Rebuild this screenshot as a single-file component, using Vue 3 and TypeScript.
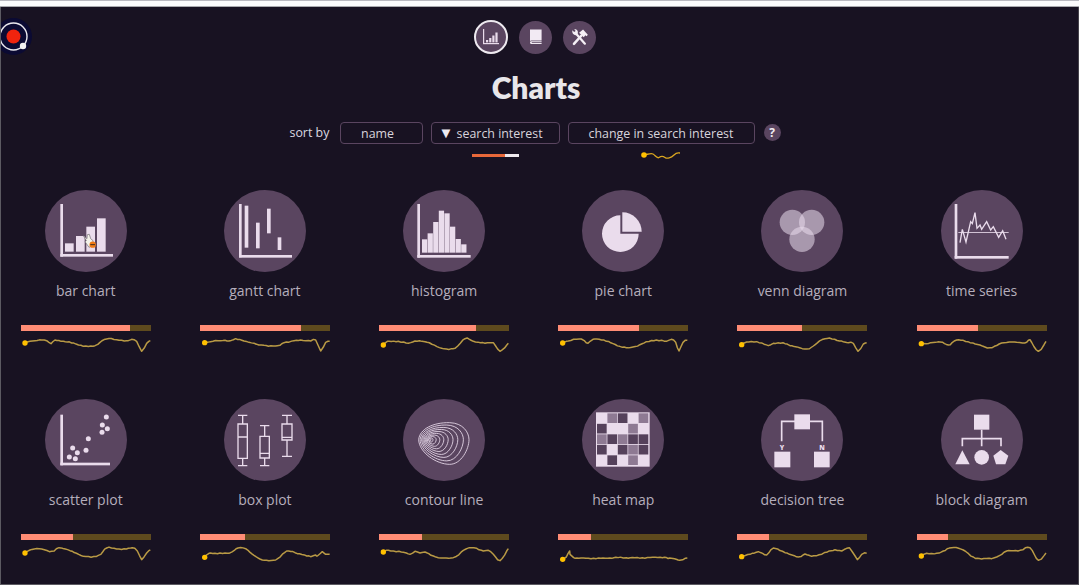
<template>
  <div class="browser-strip"></div>
  <div class="page">
    <!-- recording button of the screen capture tool -->
    <div class="recorder">
      <svg width="37" height="37" viewBox="0 0 37 37">
        <circle cx="18.5" cy="18.5" r="18.5" fill="#0b0a33" />
        <circle cx="18.5" cy="18.5" r="13.5" fill="none" stroke="#eceaf0" stroke-width="1.4" />
        <circle cx="18.5" cy="18.5" r="7" fill="#f0240e" />
        <circle cx="28" cy="28" r="3.2" fill="#f2f2f2" />
      </svg>
    </div>

    <nav class="top-nav">
      <button class="nav-btn active">
        <svg width="18" height="18" viewBox="0 0 18 18" fill="#eadcec">
          <rect x="1" y="1" width="1.2" height="15" />
          <rect x="1" y="15" width="16" height="1.2" />
          <rect x="4" y="12" width="2.2" height="2.4" />
          <rect x="7.2" y="10" width="2.2" height="4.4" />
          <rect x="10.3" y="7.5" width="2.2" height="6.9" />
          <rect x="13.4" y="4.5" width="2.2" height="9.9" />
        </svg>
      </button>
      <button class="nav-btn">
        <svg width="18" height="18" viewBox="0 0 18 18" fill="#f2eaf3">
          <path d="M3 1.500H14.600V12.400H4.400C3.800 12.400 3.300 12.600 3 13Z" />
          <path d="M3 14.500C3 13.700 3.600 13.300 4.400 13.300H14.600V14.200H4.800V15H14.600V16H4.400C3.600 16 3 15.300 3 14.500Z" />
        </svg>
      </button>
      <button class="nav-btn">
        <svg width="19" height="19" viewBox="0 0 24 24">
          <g fill="none" stroke="#f6f0f6" stroke-linecap="round">
            <path d="M14.500 9.500 5 20" stroke-width="3.200" />
            <path d="M8 7.500 18.800 19.800" stroke-width="2.800" />
          </g>
          <path d="M11.500 6 16.500 2 22.500 8.500 21 10.300 19.500 9.200 17.300 11.800Z" fill="#f6f0f6" />
          <path d="M3 2.800 5.200 5.200 7.200 3.800 5.300 1.700C8.200 1 10.800 3.600 9.800 6.800L8.500 8.800C5.500 10 2 6.500 3 2.800Z" fill="#f6f0f6" />
        </svg>
      </button>
    </nav>

    <h1 class="page-title">{{ title }}</h1>

    <div class="sort-row">
      <span class="sort-label">sort by</span>
      <div class="sort-col col-name">
        <button class="sort-btn">name</button>
      </div>
      <div class="sort-col col-interest">
        <button class="sort-btn"><span class="sort-arrow">▼</span> search interest</button>
        <div class="hint-bar"><div class="hint-fill"></div></div>
      </div>
      <div class="sort-col col-change">
        <button class="sort-btn">change in search interest</button>
        <svg class="hint-spark" width="40" height="8" viewBox="0 0 40 8">
          <path d="M3 4C8 3 10 2 12 3S16 8 18 6.500 22 5 24 6.500 30 7 33 4 37 2 39 2" fill="none" stroke="#d9a520" stroke-width="1.3" />
          <circle cx="3" cy="4" r="2.8" fill="#ffc000" />
        </svg>
      </div>
      <span class="help">?</span>
    </div>

    <div class="charts-grid">
      <div v-for="chart in charts" :key="chart.name" class="chart-card">
        <div class="chart-circle">
          <svg class="chart-icon" width="82" height="82" viewBox="0 0 246 246">
            <g v-if="chart.kind === 'bar'" class="solid">
              <rect x="46" y="42" width="8" height="158" />
              <rect x="46" y="192" width="158" height="8" />
              <rect x="60" y="160" width="26" height="25" />
              <rect x="93" y="138" width="26" height="47" />
              <rect x="124" y="110" width="26" height="75" />
              <rect x="156" y="85" width="26" height="100" />
              <path d="M115 137 126 146 127 134 133 133 137 146 144 152 144 165 132 172 120 155 124 152Z" fill="#f3f2ea" stroke="#6e6a70" stroke-width="2" />
              <circle cx="143" cy="164" r="9.500" fill="#f07a14" />
              <rect x="136" y="162" width="14" height="3.500" fill="#5a3a20" />
            </g>
            <g v-else-if="chart.kind === 'gantt'" class="solid">
              <rect x="45" y="42" width="8" height="160" />
              <rect x="45" y="195" width="159" height="8" />
              <rect x="62" y="47" width="11" height="126" />
              <rect x="96" y="98" width="11" height="77" />
              <rect x="129" y="56" width="11" height="74" />
              <rect x="161" y="142" width="11" height="38" />
            </g>
            <g v-else-if="chart.kind === 'histogram'" class="solid">
              <rect x="43" y="42" width="8" height="161" />
              <rect x="43" y="195" width="160" height="8" />
              <rect v-for="(top, i) in histTops" :key="i" :x="57 + i * 16.8" :y="top" width="15.800" :height="188 - top" />
            </g>
            <g v-else-if="chart.kind === 'pie'" class="solid">
              <path d="M115 131V76A55 55 0 1 0 170 131Z" />
              <path d="M121 125V67A58 58 0 0 1 179 125Z" />
            </g>
            <g v-else-if="chart.kind === 'venn'" class="venn">
              <circle cx="94" cy="97" r="38" />
              <circle cx="152" cy="97" r="38" />
              <circle cx="123" cy="148" r="38" />
            </g>
            <g v-else-if="chart.kind === 'time'" class="solid">
              <rect x="41" y="42" width="8" height="164" />
              <rect x="41" y="198" width="162" height="8" />
              <rect x="52" y="126" width="151" height="2.500" />
              <polyline class="line" points="57,158 64,118 75,156 89,95 94,101 102,68 108,115 117,105 122,118 137,95 149,120 157,110 173,142 185,122 195,148" />
            </g>
            <g v-else-if="chart.kind === 'scatter'" class="solid">
              <rect x="46" y="47" width="8" height="152" />
              <rect x="46" y="191" width="149" height="8" />
              <circle v-for="(dot, i) in scatterDots" :key="i" :cx="dot[0]" :cy="dot[1]" r="7.500" />
            </g>
            <g v-else-if="chart.kind === 'box'" class="line boxes">
              <path d="M42 49H70M56 49V75M42 75H70V178H42ZM42 114H70M56 178V200M42 200H70" />
              <path d="M108 80H136M122 80V112M108 112H136V177H108ZM108 163H136M122 177V200M108 200H136" />
              <path d="M174 49H204M189 49V75M174 75H204V123H174ZM174 115H204M189 123V172M174 172H204" />
            </g>
            <g v-else-if="chart.kind === 'contour'" class="contour">
              <path
                v-for="s in contourScales"
                :key="s"
                d="M47 122C50 90 90 70 140 71 180 72 198 100 198 122 198 150 175 196 140 196 100 196 48 160 47 122Z"
                vector-effect="non-scaling-stroke"
                :transform="`translate(78 122) scale(${s}) translate(-78 -122)`"
              />
            </g>
            <g v-else-if="chart.kind === 'heat'">
              <rect class="solid-rect" x="42" y="40" width="161" height="163" />
              <template v-for="(row, r) in heatCells" :key="r">
                <rect
                  v-for="(cell, c) in row"
                  :key="c"
                  :class="`heat-${cell}`"
                  :x="45 + c * 31.200"
                  :y="43 + r * 31.500"
                  width="29"
                  height="29"
                />
              </template>
            </g>
            <g v-else-if="chart.kind === 'tree'" class="solid">
              <path class="line thick" d="M62 127V67H184V127" />
              <rect x="100" y="46" width="47" height="45" />
              <rect x="40" y="158" width="48" height="47" />
              <rect x="159" y="158" width="47" height="47" />
              <text class="tree-label" x="63" y="152">Y</text>
              <text class="tree-label" x="183" y="152">N</text>
            </g>
            <g v-else class="solid">
              <path class="line thick" d="M122 92V142M64 142V119H180V142" />
              <rect x="99" y="47" width="46" height="45" />
              <polygon points="64,154 86,196 43,196" />
              <circle cx="122" cy="175" r="22" />
              <polygon points="179,153 202,170 193,196 165,196 157,170" />
            </g>
          </svg>
        </div>
        <div class="chart-name">{{ chart.name }}</div>
        <div class="interest-bar">
          <div class="interest-fill" :style="{ width: chart.interest + '%' }"></div>
        </div>
        <svg class="spark" width="130" height="20" viewBox="0 0 390 60">
          <polyline class="spark-line" :points="wiggle(chart.spark)" />
          <circle class="spark-dot" :cx="firstPoint(chart.spark)[0]" :cy="firstPoint(chart.spark)[1]" r="8" />
        </svg>
      </div>
    </div>
  </div>
</template>

<script setup lang="ts">
import { ref } from "vue"

interface Chart {
  name: string
  kind: string
  interest: number
  spark: string
}

const title = ref("Charts")

const histTops = [148, 130, 96, 62, 70, 110, 147, 163]
const scatterDots = [
  [184, 54], [172, 78], [187, 89], [171, 100], [130, 119],
  [123, 154], [83, 147], [97, 161], [73, 174], [91, 179]
]
const contourScales = [1, 0.86, 0.72, 0.6, 0.48, 0.37, 0.27, 0.18, 0.1, 0.05]

// l = light, m = mid, d = dark
const heatCells = [
  ["l", "m", "d", "l", "m"],
  ["d", "l", "l", "m", "l"],
  ["m", "d", "m", "d", "d"],
  ["d", "l", "d", "m", "d"],
  ["l", "d", "l", "m", "l"]
]

const charts: Chart[] = [
  { name: "bar chart", kind: "bar", interest: 84, spark: "12,24 27,19 42,17 62,15 77,17 90,26 102,15 127,19 152,24 187,34 222,32 237,22 257,12 287,14 322,17 332,13 347,19 362,49 377,25 388,17" },
  { name: "gantt chart", kind: "gantt", interest: 78, spark: "14,23 32,20 62,17 87,18 107,11 132,18 162,25 192,31 232,32 252,23 282,17 302,15 332,18 347,15 362,48 377,22 389,19" },
  { name: "histogram", kind: "histogram", interest: 74.5, spark: "13,30 25,19 58,19 88,25 108,18 138,20 188,40 228,40 258,11 283,19 318,25 343,23 363,49 388,25" },
  { name: "pie chart", kind: "pie", interest: 62, spark: "14,24 25,19 70,12 90,25 105,13 145,19 185,34 225,36 265,20 295,15 325,19 340,13 353,22 363,48 375,22 388,16" },
  { name: "venn diagram", kind: "venn", interest: 49.5, spark: "14,29 29,21 59,20 94,32 109,25 144,26 159,32 209,42 229,33 264,11 319,20 334,23 349,25 363,49 379,27 389,23" },
  { name: "time series", kind: "time", interest: 47, spark: "13,26 29,26 69,21 94,30 119,15 159,23 189,30 219,38 254,24 299,22 329,22 339,14 364,49 387,19" },
  { name: "scatter plot", kind: "scatter", interest: 40, spark: "12,27 27,18 62,15 92,22 114,11 147,20 187,37 232,34 257,12 287,15 322,13 334,11 349,21 362,47 377,27 388,18" },
  { name: "box plot", kind: "box", interest: 35, spark: "14,40 27,28 87,28 114,12 137,14 162,34 187,48 227,48 260,21 292,29 332,38 347,33 352,36 367,23 377,31 389,31" },
  { name: "contour line", kind: "contour", interest: 33, spark: "13,24 23,19 73,25 93,31 108,22 123,27 138,24 178,41 223,41 253,19 278,11 313,21 328,19 343,31 363,50 388,14" },
  { name: "heat map", kind: "heat", interest: 25.5, spark: "14,46 25,39 35,21 47,41 135,42 205,41 335,42 365,49 388,42" },
  { name: "decision tree", kind: "tree", interest: 24.5, spark: "14,38 39,31 64,23 89,33 109,12 144,26 184,39 204,30 224,37 269,25 294,17 314,21 337,11 361,47 374,31 389,28" },
  { name: "block diagram", kind: "block", interest: 24, spark: "13,36 29,28 59,28 79,21 104,11 139,18 169,39 194,45 239,39 269,21 309,19 339,11 364,49 387,27" }
]

const parsePoints = (spark: string) => spark.split(" ").map(p => p.split(",").map(Number))

const firstPoint = (spark: string) => parsePoints(spark)[0]

// 把折线点平滑，再加一点细小的抖动，看起来像真实的趋势线
const wiggle = (spark: string) => {
  const pts = parsePoints(spark)
  const out: string[] = []
  for (let i = 0; i < pts.length - 1; i++) {
    const p0 = pts[Math.max(i - 1, 0)]
    const p1 = pts[i]
    const p2 = pts[i + 1]
    const p3 = pts[Math.min(i + 2, pts.length - 1)]
    const steps = Math.max(2, Math.round((p2[0] - p1[0]) / 7))
    for (let s = 0; s < steps; s++) {
      const t = s / steps
      const t2 = t * t
      const t3 = t2 * t
      const x = 0.5 * (2 * p1[0] + (p2[0] - p0[0]) * t + (2 * p0[0] - 5 * p1[0] + 4 * p2[0] - p3[0]) * t2 + (3 * p1[0] - p0[0] - 3 * p2[0] + p3[0]) * t3)
      const y = 0.5 * (2 * p1[1] + (p2[1] - p0[1]) * t + (2 * p0[1] - 5 * p1[1] + 4 * p2[1] - p3[1]) * t2 + (3 * p1[1] - p0[1] - 3 * p2[1] + p3[1]) * t3)
      const noise = s === 0 ? 0 : 1.2 * Math.sin(x * 0.9) + 0.8 * Math.sin(x * 0.37 + i)
      out.push(`${x.toFixed(1)},${(y + noise).toFixed(1)}`)
    }
  }
  const last = pts[pts.length - 1]
  out.push(`${last[0]},${last[1]}`)
  return out.join(" ")
}
</script>

<style>
html,
body {
  margin: 0;
  background: #181222;
}
</style>

<style scoped>
.browser-strip {
  height: 5px;
  background: #fbfbfc;
  border-top: 1px solid #b9b9c0;
  border-bottom: 1px solid #a9a9ae;
}

.page {
  position: relative;
  box-sizing: border-box;
  height: 578px;
  overflow: hidden;
  background: #181222;
  border-left: 1px solid #5c5a62;
  border-right: 1px solid #45434b;
  border-bottom: 1px solid #5c5a62;
  font-family: "Open Sans", "Noto Sans", sans-serif;
}

.recorder {
  position: absolute;
  left: -6px;
  top: 11px;
  height: 37px;
}

.top-nav {
  display: flex;
  justify-content: center;
  align-items: center;
  gap: 11px;
  padding: 13px 9px 0 0;
}

.nav-btn {
  display: flex;
  align-items: center;
  justify-content: center;
  box-sizing: border-box;
  width: 33px;
  height: 33px;
  padding: 0;
  border: none;
  border-radius: 50%;
  background: #5a4560;
}

.nav-btn.active {
  width: 34px;
  height: 34px;
  border: 2px solid #eeeaf0;
}

.page-title {
  margin: 13px 7px 0 0;
  text-align: center;
  font-family: "Lato", "Open Sans", sans-serif;
  font-size: 30px;
  line-height: 40px;
  font-weight: 800;
  color: #e8e6ea;
}

.sort-row {
  display: flex;
  justify-content: center;
  align-items: flex-start;
  height: 68px;
  margin-top: 15px;
  padding-right: 9px;
  font-size: 12.4px;
  color: #dcd9e0;
}

.sort-label {
  width: 50px;
  line-height: 22px;
}

.sort-col {
  display: flex;
  flex-direction: column;
  align-items: center;
}

.col-name {
  width: 83px;
  margin-right: 8px;
}

.col-name .sort-btn {
  padding-right: 7px;
}

.col-interest {
  width: 129px;
  margin-right: 8px;
}

.col-interest .sort-btn {
  padding-left: 7px;
  text-align: left;
}

.col-change {
  width: 187px;
  margin-right: 9px;
}

.sort-btn {
  box-sizing: border-box;
  width: 100%;
  height: 22px;
  padding: 1px 0 0;
  border: 1px solid #5a4560;
  border-radius: 4px;
  background: transparent;
  color: #d8d4dc;
  font: inherit;
  line-height: 19px;
}

.sort-arrow {
  font-size: 15px;
  line-height: 15px;
  color: #eeeaf0;
}

.hint-bar {
  width: 47px;
  height: 3px;
  margin-top: 10px;
  background: #eee9ee;
}

.hint-fill {
  width: 33px;
  height: 100%;
  background: #e8683a;
}

.hint-spark {
  margin-top: 7px;
}

.help {
  width: 17px;
  height: 17px;
  margin-top: 2px;
  border-radius: 50%;
  background: #5a4560;
  color: #f1edf2;
  font-size: 12px;
  font-weight: 700;
  line-height: 17px;
  text-align: center;
}

.charts-grid {
  display: grid;
  grid-template-columns: repeat(6, 130px);
  column-gap: 49.2px;
  row-gap: 44.5px;
  padding-left: 19.7px;
}

.chart-card {
  display: flex;
  flex-direction: column;
  align-items: center;
}

.chart-circle {
  width: 82px;
  height: 82px;
  border-radius: 50%;
  background: #5a4560;
}

.chart-icon {
  display: block;
}

.chart-name {
  margin-top: 9px;
  font-size: 14px;
  line-height: 20px;
  color: #b5aebc;
}

.interest-bar {
  width: 130px;
  height: 5.5px;
  margin-top: 24px;
  background: #5e4a1e;
}

.interest-fill {
  height: 100%;
  background: #ff8c75;
}

.spark {
  display: block;
  margin-top: 4px;
}

.spark-line {
  fill: none;
  stroke: #b99a45;
  stroke-width: 4.5;
  stroke-linejoin: round;
}

.spark-dot {
  fill: #ffc000;
}

.solid,
.solid-rect {
  fill: #eadcec;
}

.line {
  fill: none;
  stroke: #eadcec;
  stroke-width: 4;
}

.line.thick {
  stroke-width: 5;
}

.venn circle {
  fill: #eadcec;
  fill-opacity: 0.55;
}

.contour path {
  fill: none;
  stroke: #eadcec;
  stroke-width: 1;
  stroke-opacity: 0.85;
}

.heat-l {
  fill: #eadcec;
}

.heat-m {
  fill: #8e7a93;
}

.heat-d {
  fill: #55415b;
}

.tree-label {
  fill: #eadcec;
  font-family: "Open Sans", sans-serif;
  font-size: 20px;
  font-weight: 800;
  text-anchor: middle;
}
</style>
